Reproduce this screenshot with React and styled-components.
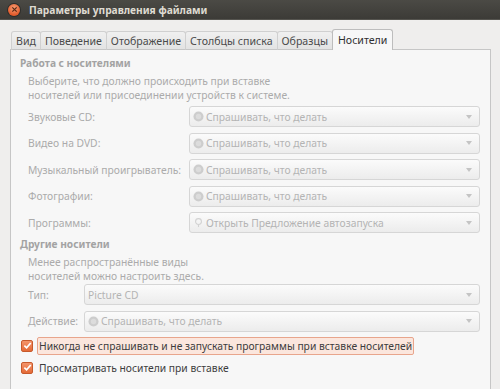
import React from "react";
import styled, { createGlobalStyle } from "styled-components";

const GlobalStyle = createGlobalStyle`
  html, body {
    margin: 0;
    padding: 0;
    width: 500px;
    height: 389px;
    overflow: hidden;
    background: #efeeed;
    font-family: "Noto Sans", "DejaVu Sans", sans-serif;
  }
`;

const mainRows = [
  { label: "Звуковые CD:", value: "Спрашивать, что делать", icon: "ask" },
  { label: "Видео на DVD:", value: "Спрашивать, что делать", icon: "ask" },
  { label: "Музыкальный проигрыватель:", value: "Спрашивать, что делать", icon: "ask" },
  { label: "Фотографии:", value: "Спрашивать, что делать", icon: "ask" },
  { label: "Программы:", value: "Открыть Предложение автозапуска", icon: "open" },
];

const otherRows = [
  { label: "Тип:", value: "Picture CD", icon: null },
  { label: "Действие:", value: "Спрашивать, что делать", icon: "ask" },
];

const tabs = ["Вид", "Поведение", "Отображение", "Столбцы списка", "Образцы", "Носители"];

function ComboIcon({ kind }) {
  if (kind === "open") {
    return (
      <svg width="11" height="11" viewBox="0 0 12 12">
        <circle cx="6" cy="5" r="3.2" fill="none" stroke="#d2d2d2" strokeWidth="1.2" />
        <path d="M6 8.5 V11" stroke="#d2d2d2" strokeWidth="1.2" />
      </svg>
    );
  }
  return (
    <svg width="11" height="11" viewBox="0 0 12 12">
      <circle cx="6" cy="6" r="5.5" fill="#cdcdcd" />
      <circle cx="6" cy="6" r="3" fill="#dcdcdc" />
    </svg>
  );
}

function Combo({ value, icon }) {
  return (
    <ComboBox>
      {icon && <ComboIcon kind={icon} />}
      <ComboText>{value}</ComboText>
      <Arrow />
    </ComboBox>
  );
}

function CheckBox() {
  return (
    <Box>
      <svg width="9" height="9" viewBox="0 0 10 10">
        <path d="M1.5 5.2 L4 7.6 L8.6 2.2" fill="none" stroke="#fff" strokeWidth="1.9" />
      </svg>
    </Box>
  );
}

export default function App() {
  return (
    <>
      <GlobalStyle />
      <Window>
        <TitleBar>
          <CloseButton>
            <svg width="7" height="7" viewBox="0 0 8 8">
              <path d="M1.5 1.5 L6.5 6.5 M6.5 1.5 L1.5 6.5" stroke="#5a2a16" strokeWidth="1.4" />
            </svg>
          </CloseButton>
          <Title>Параметры управления файлами</Title>
        </TitleBar>
        <Content>
          <TabBar>
            {tabs.map((t, i) => (
              <Tab key={t} active={i === tabs.length - 1}>{t}</Tab>
            ))}
          </TabBar>
          <Panel>
            <Heading>Работа с носителями</Heading>
            <Description>
              Выберите, что должно происходить при вставке
              <br />
              носителей или присоединении устройств к системе.
            </Description>
            <FormGrid labelWidth="161px">
              {mainRows.map((r) => (
                <React.Fragment key={r.label}>
                  <Label>{r.label}</Label>
                  <Combo value={r.value} icon={r.icon} />
                </React.Fragment>
              ))}
            </FormGrid>
            <Heading>Другие носители</Heading>
            <Description tight>
              Менее распространённые виды
              <br />
              носителей можно настроить здесь.
            </Description>
            <FormGrid labelWidth="56px">
              {otherRows.map((r) => (
                <React.Fragment key={r.label}>
                  <Label>{r.label}</Label>
                  <Combo value={r.value} icon={r.icon} />
                </React.Fragment>
              ))}
            </FormGrid>
            <CheckList>
              <CheckRow>
                <CheckBox />
                <CheckLabel focused>Никогда не спрашивать и не запускать программы при вставке носителей</CheckLabel>
              </CheckRow>
              <CheckRow>
                <CheckBox />
                <CheckLabel>Просматривать носители при вставке</CheckLabel>
              </CheckRow>
            </CheckList>
          </Panel>
        </Content>
      </Window>
    </>
  );
}

const Window = styled.div`
  display: flex;
  flex-direction: column;
  width: 500px;
  height: 389px;
`;

const TitleBar = styled.div`
  display: flex;
  align-items: center;
  height: 20px;
  box-sizing: border-box;
  padding-left: 8px;
  gap: 9px;
  background: linear-gradient(#4b4a45, #3c3b37);
  border-bottom: 1px solid #55544f;
`;

const CloseButton = styled.div`
  width: 12px;
  height: 12px;
  border-radius: 50%;
  display: flex;
  align-items: center;
  justify-content: center;
  background: radial-gradient(circle at 50% 35%, #f8a076, #e2592a 70%);
  box-shadow: 0 0 0 1px #2e2d2a;
`;

const Title = styled.div`
  color: #dfdbd2;
  font-size: 10.2px;
  font-weight: 700;
`;

const Content = styled.div`
  display: flex;
  flex-direction: column;
  flex: 1;
  padding: 10px 9px 0 10px;
`;

const TabBar = styled.div`
  display: flex;
  align-items: flex-end;
  height: 20px;
  padding-left: 1px;
  position: relative;
  z-index: 1;
  margin-bottom: -1px;
`;

const Tab = styled.div`
  height: ${(p) => (p.active ? "21px" : "19px")};
  box-sizing: border-box;
  padding: 0 ${(p) => (p.active ? "5px" : "4px")};
  display: flex;
  align-items: center;
  font-size: 10.6px;
  color: ${(p) => (p.active ? "#2f2f2f" : "#4a4a4a")};
  background: ${(p) => (p.active ? "#f7f7f7" : "linear-gradient(#f0f0f0, #e3e3e3)")};
  border: 1px solid ${(p) => (p.active ? "#bdbdbd" : "#d0d0d0")};
  border-bottom: ${(p) => (p.active ? "none" : "1px solid #c6c6c6")};
  border-radius: 3px 3px 0 0;
  margin-right: -1px;
`;

const Panel = styled.div`
  flex: 1;
  background: #f7f7f7;
  border: 1px solid #c6c6c6;
  border-bottom: none;
  padding: 5px 10px 0 9px;
  display: flex;
  flex-direction: column;
`;

const Heading = styled.div`
  font-size: 10.2px;
  font-weight: 700;
  color: #a3a3a3;
  line-height: 16px;
`;

const Description = styled.div`
  font-size: 10.3px;
  color: #ababab;
  line-height: 14px;
  padding-left: 8px;
  margin: 3px 0 ${(p) => (p.tight ? "1px" : "4px")};
`;

const FormGrid = styled.div`
  display: grid;
  grid-template-columns: ${(p) => p.labelWidth} 1fr;
  row-gap: 5.5px;
  padding-left: 8px;
  align-items: center;
  margin-bottom: 3px;
`;

const Label = styled.div`
  font-size: 10.3px;
  color: #ababab;
  white-space: nowrap;
`;

const ComboBox = styled.div`
  height: 21px;
  box-sizing: border-box;
  border: 1px solid #d6d6d6;
  border-radius: 3px;
  background: linear-gradient(#fbfbfb, #ececec);
  display: flex;
  align-items: center;
  gap: 2px;
  padding: 0 7px 0 3px;
`;

const ComboText = styled.span`
  flex: 1;
  font-size: 10.3px;
  color: #b4b4b4;
  white-space: nowrap;
`;

const Arrow = styled.span`
  width: 0;
  height: 0;
  border-left: 3px solid transparent;
  border-right: 3px solid transparent;
  border-top: 4px solid #c4c4c4;
`;

const CheckList = styled.div`
  display: flex;
  flex-direction: column;
`;

const CheckRow = styled.div`
  display: flex;
  align-items: center;
  gap: 4px;
  height: 22px;
  padding-left: 1px;
`;

const Box = styled.div`
  width: 12px;
  height: 12px;
  box-sizing: border-box;
  border-radius: 2px;
  border: 1px solid #c75a2c;
  background: linear-gradient(#f4946a, #e46a37);
  display: flex;
  align-items: center;
  justify-content: center;
`;

const CheckLabel = styled.span`
  font-size: 10.3px;
  color: #3c3c3c;
  padding: 1px 1px;
  border: 1px solid ${(p) => (p.focused ? "#e8a58c" : "transparent")};
  background: ${(p) => (p.focused ? "#fbe6dd" : "transparent")};
  border-radius: 2px;
`;
